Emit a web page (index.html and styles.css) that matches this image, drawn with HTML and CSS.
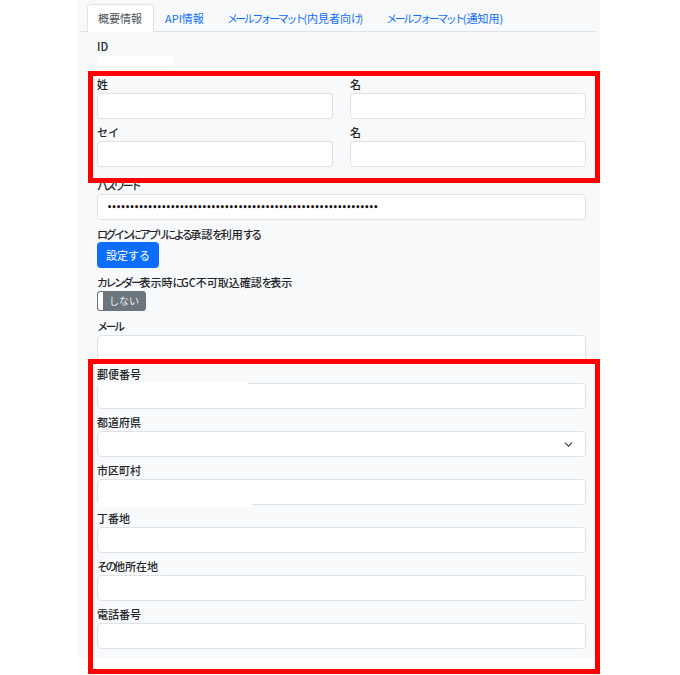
FILE: index.html
```html
<!DOCTYPE html>
<html>
<head>
    <title>ユーザー情報</title>
    <meta name="viewport" content="width=device-width, initial-scale=1">
    <link rel="stylesheet" href="styles.css">
</head>
<body>
    <div class="page">
        <div class="tabs">
            <span class="tab active">概要情報</span>
            <span class="tab">API情報</span>
            <span class="tab"><span class="kana">メールフォーマット</span>(内見者向<span class="kana">け</span>)</span>
            <span class="tab"><span class="kana">メールフォーマット</span>(通知用)</span>
        </div>

        <div class="field field-id">
            <label class="label">ID</label>
            <div class="id-value"></div>
        </div>

        <div class="row">
            <div class="field">
                <label class="label">姓</label>
                <div class="input"></div>
            </div>
            <div class="field">
                <label class="label">名</label>
                <div class="input"></div>
            </div>
        </div>
        <div class="row">
            <div class="field">
                <label class="label">セイ</label>
                <div class="input"></div>
            </div>
            <div class="field">
                <label class="label">名</label>
                <div class="input"></div>
            </div>
        </div>

        <div class="field field-password">
            <label class="label"><span class="kana">パスワード</span></label>
            <div class="input password"><span class="dots">••••••••••••••••••••••••••••••••••••••••••••••••••••••••••••</span></div>
        </div>

        <div class="field field-button">
            <label class="label"><span class="kana">ログインにアプリによる</span>承認<span class="kana">を</span>利用<span class="kana">する</span></label>
            <span class="btn">設定する</span>
        </div>

        <div class="field field-toggle">
            <label class="label"><span class="kana">カレンダー</span>表示時<span class="kana">に</span>GC不可取込確認<span class="kana">を</span>表示</label>
            <div class="toggle"><span class="knob"></span><span class="toggle-text">しない</span></div>
        </div>

        <div class="field">
            <label class="label"><span class="kana">メール</span></label>
            <div class="input"></div>
        </div>

        <div class="field">
            <label class="label">郵便番号</label>
            <div class="input"></div>
            <div class="mask mask-top"></div>
        </div>
        <div class="field">
            <label class="label">都道府県</label>
            <div class="input select">
                <svg width="9" height="9" viewBox="0 0 16 16"><path d="M2 5l6 6 6-6" fill="none" stroke="#343a40" stroke-width="2" stroke-linecap="round" stroke-linejoin="round"/></svg>
            </div>
        </div>
        <div class="field">
            <label class="label">市区町村</label>
            <div class="input"></div>
            <div class="mask mask-bottom"></div>
        </div>
        <div class="field">
            <label class="label">丁番地</label>
            <div class="input"></div>
        </div>
        <div class="field">
            <label class="label"><span class="kana">その</span>他所在地</label>
            <div class="input"></div>
        </div>
        <div class="field">
            <label class="label">電話番号</label>
            <div class="input"></div>
        </div>

        <!-- annotation boxes -->
        <div class="mark mark-name"></div>
        <div class="mark mark-address"></div>
    </div>
</body>
</html>
```

FILE: styles.css
```css
html, body { min-height: 675px; }
body { margin: 0; background-color: #fff; font-family: "Noto Sans CJK JP", sans-serif; font-size: 11px; color: #212529; }
.page { position: relative; box-sizing: border-box; width: 523px; margin-left: 77px; padding: 4px 14px 4px 20px; background-color: #f8f9fa; }

/* kana run narrower than kanji in the original font */
.kana { letter-spacing: -2.5px; }

.tabs { display: flex; height: 27px; margin: 0 -10px 0 -17px; padding-left: 7px; border-bottom: 1px solid #dee2e6; }
.tab { padding: 0 11px 0 10px; line-height: 26px; color: #0d6efd; border: 1px solid transparent; border-bottom: none; border-radius: 4px 4px 0 0; margin-bottom: -1px; }
.tab.active { background-color: #fff; border-color: #dee2e6; color: #495057; }

.field { position: relative; margin-bottom: 5px; }
.label { display: block; line-height: 16px; margin-bottom: 1px; font-weight: 500; }
.input { box-sizing: border-box; height: 26px; background-color: #fff; border: 1px solid #dee2e6; border-radius: 4px; }
.row { display: grid; grid-template-columns: 1fr 1fr; column-gap: 17px; }

.field-id { margin-top: 6px; margin-bottom: 10px; }
.id-value { width: 76px; height: 10px; margin-top: 2px; background-color: #fff; }

.field-password { margin-top: 5px; margin-bottom: 6px; }
.password { display: flex; align-items: center; padding-left: 9px; overflow: hidden; }
.dots { font-family: "DejaVu Sans", sans-serif; font-size: 8px; font-weight: bold; letter-spacing: -0.6px; color: #111; white-space: nowrap; }

.field-button { margin-bottom: 6px; }
.field-button .label { margin-bottom: 0; }
.btn { display: inline-block; height: 26px; line-height: 26px; padding: 0 9px; background-color: #0d6efd; color: #fff; border-radius: 4px; }

.field-toggle { margin-bottom: 7px; }
.toggle { display: flex; box-sizing: border-box; width: 49px; height: 20px; background-color: #6c757d; border: 1px solid #6c757d; border-radius: 3px; overflow: hidden; }
.knob { width: 5px; background-color: #fff; border-radius: 2px 0 0 2px; }
.toggle-text { flex: 1; text-align: center; line-height: 18px; font-size: 10px; color: #e9ecef; }

.select { display: flex; align-items: center; justify-content: flex-end; padding-right: 12px; }

.mask { position: absolute; left: 0; background-color: #fff; }
.mask-top { top: 16px; width: 151px; height: 4px; }
.mask-bottom { top: 40px; width: 155px; height: 5px; }

.mark { position: absolute; box-sizing: border-box; border: 5px solid #ff0000; }
.mark-name { left: 11px; top: 71px; width: 512px; height: 112px; }
.mark-address { left: 11px; top: 359px; width: 512px; height: 315px; }
```
